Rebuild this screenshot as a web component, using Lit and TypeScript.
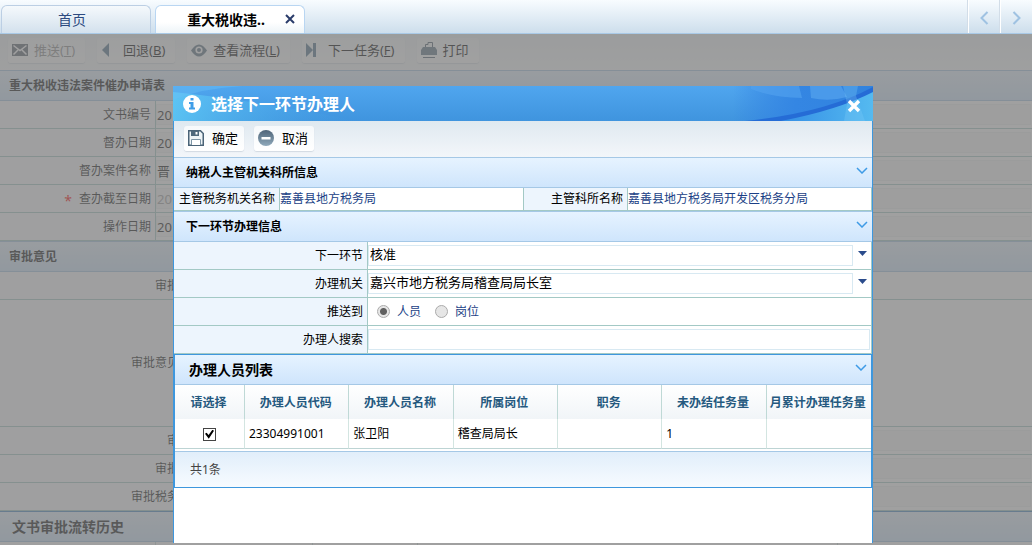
import { LitElement, html, css, svg } from "lit";
import { customElement } from "lit/decorators.js";
import { classMap } from "lit/directives/class-map.js";

const sharedStyles = css`
  * { box-sizing: border-box; }
  h1, h2, p { margin: 0; font-weight: normal; }
  button, input, select { font: inherit; color: inherit; margin: 0; }
  button { border: 0; background: none; padding: 0; cursor: pointer; }
  svg { display: block; flex: none; }
`;

const toolStyles = css`
  .tools { display: flex; align-items: center; gap: 10px; }
  .tool {
    display: flex; align-items: center; height: 25px; padding: 0 6px 0 4px; gap: 6px;
    font-size: 13px; line-height: 18px; color: #000; white-space: nowrap;
    background: linear-gradient(#f6f9fb, #fff); border-radius: 3px;
    box-shadow: 0 1px 1px rgba(120, 140, 160, 0.25);
  }
  .tool[disabled] { color: #8d8d8d; }
  .tool .icon { width: 18px; display: flex; }
`;

const icons: Record<string, unknown> = {
  send: svg`<svg width="16" height="12" viewBox="0 0 16 12"><rect width="16" height="12" fill="#5b6470"/><path d="M1.5 1.5L8 6.5L14.500 1.500M1.500 10.500L6 6M14.500 10.500L10 6" stroke="#fff" stroke-width="1.500" fill="none"/></svg>`,
  back: svg`<svg width="16" height="14" viewBox="0 0 16 14"><path d="M8 0V14L1 7Z" fill="#50748c"/></svg>`,
  eye: svg`<svg width="16" height="13" viewBox="0 0 16 13"><path d="M0 6.500Q8-5.500 16 6.500Q8 18.500 0 6.500Z" fill="#5a7284"/><circle cx="8" cy="6" r="3.600" fill="#fff"/><circle cx="8" cy="6" r="2" fill="#5a7284"/></svg>`,
  next: svg`<svg width="16" height="14" viewBox="0 0 16 14"><path d="M0 0L7 7L0 14ZM7 0H10V14H7Z" fill="#50748c"/></svg>`,
  print: svg`<svg width="16" height="16" viewBox="0 0 16 16"><path d="M4.500 5V2.500H7V.500H11.500V5" fill="none" stroke="#4d606e"/><path d="M2 5H14L16 8V13H0V8Z" fill="#5e7686"/><path d="M2 15.500H14" stroke="#4d606e"/></svg>`,
  save: svg`<svg width="16" height="16" viewBox="0 0 16 16"><path d="M.750 .750H12.500L15.250 3.500V15.250H.750Z" fill="#eef4f7" stroke="#4a6377" stroke-width="1.500"/><path d="M3 1H11V6H3Z" fill="#4f697c"/><path d="M7.500 2H9.500V4.500H7.500Z" fill="#fff"/><path d="M3.500 15V9.500H12.500V15" fill="#fff" stroke="#7d95a5"/></svg>`,
  cancel: svg`<svg width="16" height="16" viewBox="0 0 16 16"><defs><linearGradient id="g" x2="0" y2="1"><stop stop-color="#4f6478"/><stop offset="1" stop-color="#8fa9bb"/></linearGradient></defs><circle cx="8" cy="8" r="8" fill="url(#g)"/><rect x="3.500" y="7" width="9" height="2.500" fill="#fff"/></svg>`,
};

const chevron = html`<svg width="12" height="7" viewBox="0 0 12 7"><path d="M1 1L6 6L11 1" fill="none" stroke="#3e9be6" stroke-width="1.500"/></svg>`;

interface PageRow { label: string; value?: string; required?: boolean; muted?: boolean; tall?: boolean; }

@customElement("task-page")
export class TaskPage extends LitElement {
  static styles = [sharedStyles, toolStyles, css`
    :host { display: block; font-size: 12px; line-height: 16px; color: #111; background: #fff; }
    .tools { height: 36px; padding: 0 8px 4px; gap: 12px; background: linear-gradient(#eef3f6, #fafcfd); }
    .tool { padding-right: 10px; gap: 4px; }
    .heading {
      height: 31px; padding: 0 9px; display: flex; align-items: center; font-size: 12px; font-weight: bold;
      border-top: 1px solid #a3c6e4; border-bottom: 1px solid #a3c6e4;
      background: linear-gradient(#e6f2fd, #cfe5fb);
    }
    .heading.history { font-size: 14px; padding: 0 12px; border-top-color: #4388c4; }
    .row { display: grid; grid-template-columns: 156px 1fr; height: 28px; border-bottom: 1px solid #a3c9c5; }
    .review .row { grid-template-columns: 182px 1fr; }
    .row.tall, .review .row.tall { height: 127px; }
    .label { display: flex; align-items: center; justify-content: flex-end; gap: 7px; padding-right: 4px; border-right: 1px solid #a3c9c5; background: #fafcff; }
    .review .label { padding-right: 3px; border-right: 0; }
    .star { color: #f00; font-size: 14px; line-height: 12px; padding-top: 4px; }
    .value { padding: 3px 1px 3px 0; display: flex; }
    .value input { flex: 1; min-width: 0; border: 1px solid #eef2f2; padding: 0; background: #f7f7f7; font-size: 13px; }
    .value.muted input { color: #a0a0a0; }
    .history-grid { display: grid; grid-template-columns: 156px 157px 105px 420px 1fr; height: 28px; }
    .history-grid span { border-right: 1px solid #c9dcd9; }
  `];

  private basics: PageRow[] = [
    { label: "文书编号", value: "20" },
    { label: "督办日期", value: "20" },
    { label: "督办案件名称", value: "晋" },
    { label: "查办截至日期", value: "20", required: true, muted: true },
    { label: "操作日期", value: "20" },
  ];

  private reviews: PageRow[] = [
    { label: "审批" },
    { label: "审批意见", tall: true },
    { label: "审", value: "" },
    { label: "审批", value: "" },
    { label: "审批税务", value: "" },
  ];

  private row(r: PageRow, id: string) {
    return html`<div class=${classMap({ row: true, tall: !!r.tall })}>
      <label class="label" for=${id}>${r.required ? html`<span class="star">*</span>` : ""}<span>${r.label}</span></label>
      <div class=${classMap({ value: true, muted: !!r.muted })}>
        ${r.value === undefined ? "" : html`<input id=${id} .value=${r.value} readonly>`}
      </div>
    </div>`;
  }

  render() {
    return html`
      <div class="tools">
        <button class="tool" disabled><span class="icon">${icons.send}</span><span>推送(<u>T</u>)</span></button>
        <button class="tool"><span class="icon">${icons.back}</span><span>回退(<u>B</u>)</span></button>
        <button class="tool"><span class="icon">${icons.eye}</span><span>查看流程(<u>L</u>)</span></button>
        <button class="tool"><span class="icon">${icons.next}</span><span>下一任务(<u>F</u>)</span></button>
        <button class="tool"><span class="icon">${icons.print}</span><span>打印</span></button>
      </div>
      <h2 class="heading">重大税收违法案件催办申请表</h2>
      <div>${this.basics.map((r, i) => this.row(r, `basic${i}`))}</div>
      <h2 class="heading">审批意见</h2>
      <div class="review">${this.reviews.map((r, i) => this.row(r, `review${i}`))}</div>
      <h2 class="heading history">文书审批流转历史</h2>
      <div class="history-grid"><span></span><span></span><span></span><span></span></div>
    `;
  }
}

@customElement("handler-dialog")
export class HandlerDialog extends LitElement {
  static styles = [sharedStyles, toolStyles, css`
    :host { display: block; font-size: 12px; line-height: 16px; color: #000; background: #fff; overflow: hidden; }
    .title {
      display: flex; align-items: center; height: 35px; padding: 0 12px 0 10px; position: relative;
      color: #fff; background: linear-gradient(#50a6ef, #3f94de); overflow: hidden;
    }
    .title .art { position: absolute; top: 0; }
    .title .left { left: 0; }
    .title .right { right: 0; }
    .title h1 { flex: 1; font-size: 16px; line-height: 20px; font-weight: bold; padding-left: 10px; position: relative; }
    .title .info, .title button { position: relative; }
    .title button { padding-top: 4px; }
    .frame { border: solid #3e97dd; border-width: 0 1px; height: 100%; }
    .tools { height: 36px; padding: 0 10px 2px; background: linear-gradient(#dfe9f0, #f3f6fa); }
    .section {
      display: flex; align-items: center; justify-content: space-between; height: 31px;
      padding: 0 4px 0 12px; border-top: 1px solid #a5c8e6; border-bottom: 1px solid #a5c8e6;
      background: linear-gradient(#e6f3ff, #cfe5fc);
    }
    .section h2 { font-size: 12px; font-weight: bold; line-height: 16px; }
    .section button { padding-bottom: 5px; }
    .facts { display: grid; grid-template-columns: 106px 1fr 104px 1fr; height: 23px; border-bottom: 1px solid #a3c9c5; }
    .facts > * { display: flex; align-items: center; border-right: 1px solid #a3c9c5; }
    .name { display: flex; align-items: center; justify-content: flex-end; padding-right: 4px; background: #edf5fd; border-right: 1px solid #a3c9c5; }
    .fact { color: #1b3f86; }
    .field { display: grid; grid-template-columns: 194px 1fr; height: 28px; border-bottom: 1px solid #a3c9c5; border-right: 1px solid #a3c9c5; }
    .control { display: flex; align-items: center; padding-right: 1px; }
    .control select, .control .search {
      flex: 1; min-width: 0; height: 21px; border: 1px solid #d8e9f2; border-radius: 0; background: #fff;
      padding: 0 1px 3px; font-size: 13px; line-height: 16px; appearance: none; outline: 0;
    }
    .arrow { padding: 0 3px 4px 5px; }
    .choice { display: flex; align-items: center; gap: 7px; color: #1b3f86; margin-left: 9px; }
    .choice + .choice { margin-left: 14px; }
    .choice input {
      appearance: none; width: 13px; height: 13px; border: 1px solid #ababab; border-radius: 50%;
      background: #e6e6e6;
    }
    .choice input:checked { background: radial-gradient(circle, #606060 0 3px, #e6e6e6 4px); }
    .list { border: 1px solid #3e97dd; }
    .list .section { height: 30px; border-top: 0; padding-left: 14px; padding-right: 4px; }
    .list .section h2 { font-size: 14px; line-height: 18px; }
    table { width: 100%; border-collapse: separate; border-spacing: 0; table-layout: fixed; }
    th, td { padding: 0 4px; text-align: left; border-right: 1px solid #d3e5e1; white-space: nowrap; }
    th { height: 34px; padding: 2px 2px 0 0; text-align: center; color: #25597f; border-right-color: #bfd9d6; }
    th:last-child, td:last-child { border-right: 0; }
    thead { background: linear-gradient(#fff, #f1f5f8); }
    td { height: 30px; border-bottom: 1px solid #bdd4d4; }
    .pick { width: 70px; text-align: center; }
    .pick input {
      appearance: none; display: inline-grid; place-items: center; vertical-align: middle;
      width: 13px; height: 13px; border: 1px solid #444; background: #fff;
    }
    .pick input:checked::before { content: ""; width: 9px; height: 9px; background: #000; clip-path: polygon(0 45%, 18% 32%, 40% 58%, 82% 0, 100% 12%, 42% 100%); }
    .count { display: flex; align-items: center; height: 36px; margin-top: 2px; padding: 0 15px; color: #444; border-top: 1px solid #a5c8e6; background: linear-gradient(#e1eefa, #f7fbff); }
  `];

  private columns = ["办理人员代码", "办理人员名称", "所属岗位", "职务", "未办结任务量", "月累计办理任务量"];
  private handlers = [["23304991001", "张卫阳", "稽查局局长", "", "1", ""]];

  private section(title: string) {
    return html`<div class="section"><h2>${title}</h2><button aria-label=${title}>${chevron}</button></div>`;
  }

  private picker(id: string, label: string, value: string) {
    return html`<div class="field"><label class="name" for=${id}>${label}</label><div class="control">
      <select id=${id}><option>${value}</option></select>
      <span class="arrow"><svg width="9" height="5" viewBox="0 0 9 5"><path d="M0 0H9L4.500 5Z" fill="#2b4c8c"/></svg></span>
    </div></div>`;
  }

  render() {
    return html`
      <div class="title">
        <svg class="art left" width="190" height="35" viewBox="0 0 190 35"><defs><linearGradient id="l"><stop stop-color="#62d0f8"/><stop offset="1" stop-color="#46a0e8" stop-opacity="0"/></linearGradient></defs><path d="M0 6Q80 14 185 35H0Z" fill="url(#l)" opacity=".75"/><path d="M0 0H70Q30 2 0 14Z" fill="#68bff6" opacity=".45"/></svg>
        <svg class="art right" width="140" height="35" viewBox="0 0 140 35"><defs><linearGradient id="r"><stop stop-color="#2f7de0" stop-opacity="0"/><stop offset=".45" stop-color="#3486e3"/><stop offset="1" stop-color="#3183de"/></linearGradient><linearGradient id="s"><stop stop-color="#348ee5"/><stop offset="1" stop-color="#55baf0"/></linearGradient></defs><rect width="140" height="35" fill="url(#r)"/><path d="M18 0H66L69 12Q38 11 18 3Z" fill="#51a2ee" opacity=".65"/><path d="M77 0H108L114 11Q96 16 78 12Z" fill="#5aa9f0" opacity=".6"/><path d="M12 35Q92 27 140 1V7Q100 29 50 35Z" fill="#256cd6"/><path d="M48 35Q105 24 140 6V35Z" fill="url(#s)"/><path d="M110 0H125L123 10L132 35H111L114 18Z" fill="#7dcdf7" opacity=".3"/></svg>
        <svg class="info" width="18" height="18" viewBox="0 0 18 18"><circle cx="9" cy="9" r="9" fill="#fff"/><path d="M7.500 3H10.500V5.500H7.500ZM6 7H10.500V12.500H12V14.500H6V12.500H7.500V9H6Z" fill="#3f9de8"/></svg>
        <h1>选择下一环节办理人</h1>
        <button aria-label="关闭"><svg width="14" height="14" viewBox="0 0 14 14"><path d="M2 2L12 12M12 2L2 12" stroke="#fff" stroke-width="3.400"/></svg></button>
      </div>
      <div class="frame">
        <div class="tools">
          <button class="tool"><span class="icon">${icons.save}</span><span>确定</span></button>
          <button class="tool"><span class="icon">${icons.cancel}</span><span>取消</span></button>
        </div>
        ${this.section("纳税人主管机关科所信息")}
        <div class="facts">
          <span class="name">主管税务机关名称</span><span class="fact">嘉善县地方税务局</span>
          <span class="name">主管科所名称</span><span class="fact">嘉善县地方税务局开发区税务分局</span>
        </div>
        ${this.section("下一环节办理信息")}
        ${this.picker("step", "下一环节", "核准")}
        ${this.picker("office", "办理机关", "嘉兴市地方税务局稽查局局长室")}
        <div class="field"><span class="name">推送到</span><div class="control">
          <label class="choice"><input type="radio" name="target" checked>人员</label>
          <label class="choice"><input type="radio" name="target">岗位</label>
        </div></div>
        <div class="field"><label class="name" for="search">办理人搜索</label><div class="control"><input class="search" id="search" type="text"></div></div>
        <div class="list">
          ${this.section("办理人员列表")}
          <table>
            <thead><tr><th class="pick">请选择</th>${this.columns.map((c) => html`<th>${c}</th>`)}</tr></thead>
            <tbody>${this.handlers.map((h) => html`<tr><td class="pick"><input type="checkbox" aria-label=${h[1]} checked></td>${h.map((v) => html`<td>${v}</td>`)}</tr>`)}</tbody>
          </table>
          <p class="count">共1条</p>
        </div>
      </div>
    `;
  }
}

@customElement("app-root")
export class AppRoot extends LitElement {
  static styles = [sharedStyles, css`
    :host {
      display: flex; flex-direction: column; height: 100vh; overflow: hidden;
      font-family: "Noto Sans", "Noto Sans CJK SC", sans-serif;
    }
    .tabs { display: flex; align-items: flex-end; flex: none; height: 34px; padding-left: 1px; gap: 4px; border-bottom: 1px solid #a9c9e6; background: linear-gradient(#f8fcff, #cddeec); }
    .tab {
      display: flex; align-items: center; justify-content: center; width: 150px; height: 28px; padding-right: 8px;
      border: 1px solid #bccfe4; border-bottom: 0; border-radius: 6px 6px 0 0;
      font-size: 14px; line-height: 20px; color: #2c4a80; background: linear-gradient(#f5f9fc, #d3e1ed);
    }
    .tab.active {
      justify-content: flex-end; padding-right: 9px; gap: 20px; color: #000; font-weight: bold;
      border-color: #b9d6f2; background: linear-gradient(#fff 60%, #edf4f8);
    }
    .tab .close { padding-bottom: 2px; }
    .scroll { display: flex; margin-left: auto; align-self: stretch; }
    .scroll button { width: 32px; display: flex; align-items: center; justify-content: center; border-left: 1px solid #fff; box-shadow: -1px 0 #d2dde8; padding-top: 3px; }
    main { flex: 1; min-height: 0; position: relative; overflow: hidden; }
    .mask { position: absolute; inset: 0; display: flex; justify-content: center; padding: 52px 0 2px 14px; background: rgba(119, 119, 119, 0.7); }
    handler-dialog { width: 700px; }
  `];

  render() {
    return html`
      <nav class="tabs">
        <div class="tab"><button>首页</button></div>
        <div class="tab active"><button>重大税收违..</button>
          <button class="close" aria-label="关闭"><svg width="10" height="10" viewBox="0 0 10 10"><path d="M1 1L9 9M9 1L1 9" stroke="#2a3c6a" stroke-width="2"/></svg></button></div>
        <div class="scroll">
          <button aria-label="向左"><svg width="9" height="14" viewBox="0 0 9 14"><path d="M7.500 1L1.500 7L7.500 13" fill="none" stroke="#9fc2e2" stroke-width="2"/></svg></button>
          <button aria-label="向右"><svg width="9" height="14" viewBox="0 0 9 14"><path d="M1.500 1L7.500 7L1.500 13" fill="none" stroke="#9fc2e2" stroke-width="2"/></svg></button>
        </div>
      </nav>
      <main>
        <task-page></task-page>
        <div class="mask"><handler-dialog role="dialog" aria-label="选择下一环节办理人"></handler-dialog></div>
      </main>
    `;
  }
}
